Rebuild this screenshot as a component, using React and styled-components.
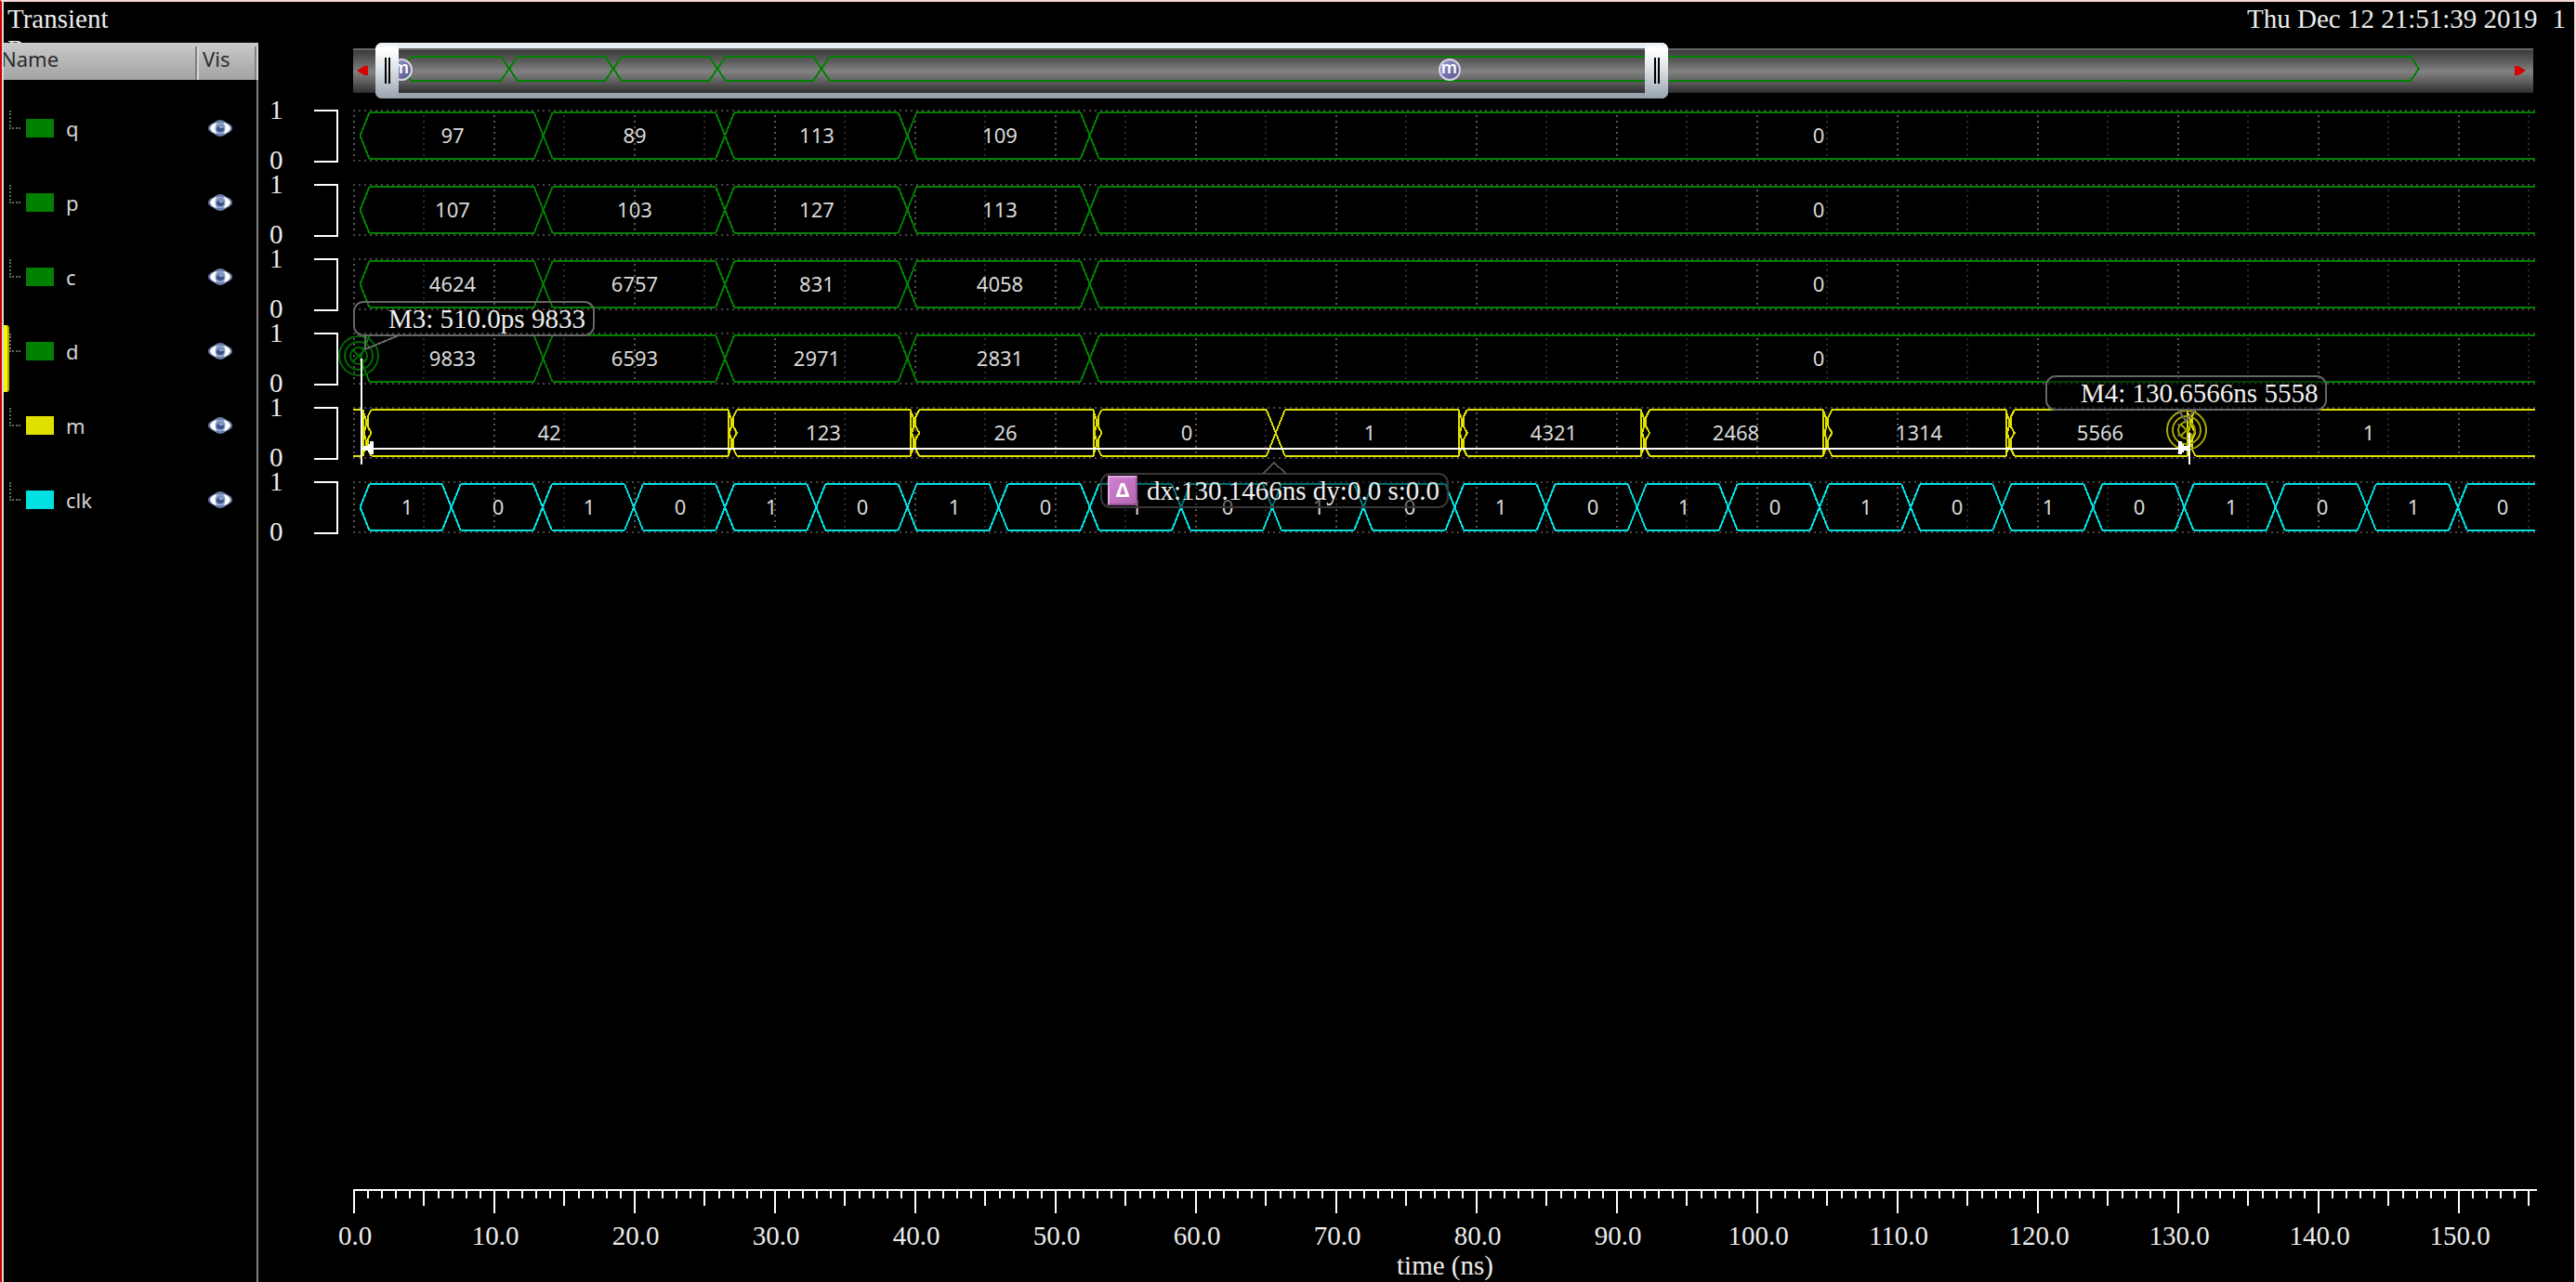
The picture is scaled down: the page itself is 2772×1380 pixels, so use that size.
import React, { useLayoutEffect, useRef, useState } from "react";
import styled, { createGlobalStyle } from "styled-components";

const serif = '"Liberation Serif", "Times New Roman", serif';
const sans = '"Noto Sans", "Open Sans", sans-serif';

const GREEN = "#008000";
const YELLOW = "#e0e000";
const CYAN = "#00e0e0";

/* ---------- data ---------- */

const VIEW_NS = 155.5;
const TAIL_NS = 156.2;
const busTimes = [0.5, 13.55, 26.5, 39.5, 52.5];

const bus = (values) => values.map((value, i) => ({ at: busTimes[i], value }));

const signals = [
  { name: "q", color: GREEN, segments: bus(["97", "89", "113", "109", "0"]) },
  { name: "p", color: GREEN, segments: bus(["107", "103", "127", "113", "0"]) },
  { name: "c", color: GREEN, segments: bus(["4624", "6757", "831", "4058", "0"]) },
  { name: "d", color: GREEN, selected: true, segments: bus(["9833", "6593", "2971", "2831", "0"]) },
  {
    name: "m",
    color: YELLOW,
    segments: [
      { at: 0.9, value: "42", glitch: true },
      { at: 26.95, value: "123", glitch: true },
      { at: 39.95, value: "26", glitch: true },
      { at: 52.95, value: "0", glitch: true },
      { at: 65.75, value: "1" },
      { at: 79, value: "4321", glitch: true },
      { at: 92, value: "2468", glitch: true },
      { at: 105, value: "1314", glitch: true },
      { at: 118, value: "5566", glitch: true },
      { at: 130.9, value: "1", glitch: true },
    ],
  },
  {
    name: "clk",
    color: CYAN,
    segments: Array.from({ length: 24 }, (_, i) => ({
      at: 0.5 + 6.5 * i,
      value: i % 2 ? "0" : "1",
    })),
  },
];

/* ---------- styles ---------- */

const GlobalStyle = createGlobalStyle`
  body { margin: 0; background: #000; }
  * { box-sizing: border-box; }
`;

const Page = styled.div`
  display: flex;
  flex-direction: column;
  min-height: 100vh;
  color: #ececec;
  background: #000;
  font: 29px/33px ${serif};
  border-top: 2px solid #f8d8d8;
  border-right: 2px solid #f8d8d8;
  border-left: 2px solid #d00000;
`;

const Header = styled.header`
  display: flex;
  justify-content: space-between;
  height: 44px;
  padding: 2px 9px 0 4px;
  overflow: hidden;
  border-left: 2px solid #d8d8d8;
`;

const Title = styled.h1`
  margin: 0;
  font: inherit;
  white-space: pre-line;
`;

const Stamp = styled.div`
  display: flex;
  gap: 16px;
  white-space: nowrap;
`;

const Body = styled.div`
  display: grid;
  grid-template-columns: 276px 1fr;
  flex: 1;
`;

const Sidebar = styled.aside`
  border-left: 2px solid #d8d8d8;
  background: linear-gradient(#808080, #808080) right / 2px 100% no-repeat;
  overflow: hidden;
  font: 22px/30px ${sans};
`;

const SignalTable = styled.table`
  width: 100%;
  table-layout: fixed;
  border-collapse: collapse;
  color: #d4d4d4;
`;

const HeadCell = styled.th`
  width: ${(p) => p.$width || "auto"};
  height: 40px;
  padding: 0 0 6px ${(p) => (p.$width ? "0" : "4px")};
  text-indent: ${(p) => (p.$width ? "-3px" : "0")};
  font-weight: 400;
  text-align: left;
  color: #2c2c2c;
  background:
    linear-gradient(90deg, #808080 50%, #d6d6d6 50%) right 0 bottom 0 / 4px 36px no-repeat,
    linear-gradient(#cacaca, #a2a2a2);
`;

const HeadGap = styled.tbody`
  td { height: 12px; padding: 0; }
`;

const SignalCell = styled.td`
  position: relative;
  height: 80px;
  padding: 0;
`;

const SignalName = styled.div`
  display: flex;
  align-items: center;
  height: 80px;
  padding-left: 6px;
`;

const Branch = styled.span`
  width: 12px;
  height: 20px;
  margin: 0 6px 18px 0;
  border: dotted #666;
  border-width: 0 0 2px 2px;
`;

const Swatch = styled.span`
  width: 30px;
  height: 20px;
  margin-right: 13px;
  background: ${(p) => p.$color};
`;

const Selection = styled.span`
  position: absolute;
  left: 0;
  top: 12px;
  width: 6px;
  height: 72px;
  border-right: 2px solid #a8a800;
  border-radius: 0 3px 3px 0;
  background: #f4f400;
`;

const EyeButton = styled.button`
  display: block;
  width: 28px;
  height: 20px;
  margin-left: 9px;
  padding: 0;
  border: 0;
  background: none;
  svg { display: block; }
`;

const Main = styled.main`
  display: flex;
  flex-direction: column;
  padding-right: 42px;
  min-width: 0;
`;

const Overview = styled.div`
  position: relative;
  height: 60px;
  margin-left: 102px;
  padding: 6px 2px 6px 0;
`;

const Track = styled.div`
  display: flex;
  justify-content: space-between;
  align-items: center;
  height: 48px;
  padding: 0 8px 2px 4px;
  border-top: 2px solid #666;
  background: linear-gradient(#3c3c3c, #5a5a5a 24%, #828282 50%, #5a5a5a 76%, #2e2e2e);
`;

const ArrowButton = styled.button`
  width: 12px;
  height: 10px;
  padding: 0;
  border: 0;
  background: none;
  svg { display: block; }
`;

const Drawing = styled.svg`
  position: absolute;
  left: 0;
  top: 0;
  width: 100%;
  height: 100%;
  overflow: visible;
  pointer-events: none;
`;

const MarkerBadge = styled.span`
  position: absolute;
  top: 17px;
  width: 24px;
  height: 24px;
  border: 2px solid #d4d4e4;
  border-radius: 50%;
  background: linear-gradient(135deg, #9a9ad0, #55558a);
  color: #fff;
  font: 600 18px/15px ${sans};
  text-align: center;
  text-indent: -1px;
`;

const Range = styled.div`
  position: absolute;
  top: 0;
  display: flex;
  justify-content: space-between;
  height: 60px;
  border: solid;
  border-width: 6px 0;
  border-color: #e6edf3 transparent #98a3ae;
  border-radius: 7px;
`;

const Grip = styled.button`
  display: flex;
  justify-content: center;
  align-items: center;
  gap: 2px;
  width: 25px;
  height: 60px;
  margin: -6px 0;
  padding: 0 0 8px;
  border: 0;
  border-radius: ${(p) => (p.$end ? "0 7px 7px 0" : "7px 0 0 7px")};
  background: linear-gradient(#e8eef4, #fff 12%, #e0e5e9 45%, #98a3ae);
  &::before, &::after {
    content: "";
    width: 2px;
    height: 28px;
    margin-top: 8px;
    background: #000;
  }
`;

const Lanes = styled.div`
  position: relative;
  margin-left: 102px;
`;

const LaneList = styled.div`
  margin-left: -102px;
`;

const Lane = styled.div`
  display: grid;
  grid-template-columns: 60px 26px 16px 1fr;
  height: 80px;
`;

const Levels = styled.div`
  display: flex;
  flex-direction: column;
  justify-content: space-between;
  height: 76px;
  padding: 2px 0 0 12px;
  line-height: 20px;
`;

const Bracket = styled.span`
  height: 57px;
  margin-top: 12px;
  border: solid #fff;
  border-width: 2px 2px 2px 0;
`;

const WaveSvg = styled.svg`
  grid-column: 4;
  display: block;
  width: 100%;
  height: 80px;
  overflow: visible;
  text {
    font: 22px ${sans};
    fill: #dadada;
    text-anchor: middle;
  }
`;

const Callout = styled.div`
  position: absolute;
  display: flex;
  align-items: center;
  gap: 10px;
  height: 38px;
  padding: 0 8px 0 ${(p) => p.$indent}px;
  border: 2px solid ${(p) => p.$line};
  border-radius: 11px;
  background: ${(p) => p.$fill};
  color: #f0f0f0;
  white-space: nowrap;
`;

const DeltaIcon = styled.span`
  width: 32px;
  height: 32px;
  border: 2px solid;
  border-color: #e6a8e4 #9a549a #9a549a #e6a8e4;
  background: linear-gradient(135deg, #d080ce, #b468b4);
  color: #fff;
  font: 700 21px/26px ${sans};
  text-align: center;
`;

const AxisSvg = styled.svg`
  display: block;
  width: 100%;
  height: 100px;
  overflow: visible;
  text {
    font: 29px ${serif};
    fill: #ececec;
    text-anchor: middle;
  }
`;

const Axis = styled.footer`
  margin: auto 0 0 102px;
`;

/* ---------- drawing ---------- */

function useWidth() {
  const ref = useRef(null);
  const [width, setWidth] = useState(1200);
  useLayoutEffect(() => {
    const measure = () => setWidth(ref.current.getBoundingClientRect().width);
    measure();
    const observer = new ResizeObserver(measure);
    observer.observe(ref.current);
    return () => observer.disconnect();
  }, []);
  return [ref, width];
}

const Eye = () => (
  <svg width="28" height="20" viewBox="0 0 28 20" aria-hidden="true">
    <ellipse cx="14" cy="10" rx="13" ry="7" fill="#62779f" />
    <ellipse cx="14" cy="10" rx="9" ry="9" fill="#6a80ae" />
    <ellipse cx="14" cy="10" rx="11" ry="6" fill="#a4b4d6" />
    <path d="M3 10Q5 5 10 4Q7 10 10 16Q5 15 3 10ZM25 10Q23 5 18 4Q21 10 18 16Q23 15 25 10Z" fill="#fff" />
    <ellipse cx="14" cy="10" rx="5" ry="5" fill="#7c90ba" />
    <ellipse cx="14" cy="11" rx="4" ry="3" fill="#3c5488" />
    <path d="M13 8h4v2h-4z" fill="#8fa2cc" />
  </svg>
);

const TOP = 15;
const MID = 40;
const BOT = 65;

function wavePath(segments, x, end) {
  let d = "";
  segments.forEach((s, i) => {
    const a = x(s.at);
    const next = segments[i + 1];
    const startPad = s.glitch ? 6 : 10;
    const b = next ? x(next.at) - (next.glitch ? 3 : 10) : end;
    d += `M${a + startPad} ${TOP}H${b}M${a + startPad} ${BOT}H${b}`;
    if (s.glitch) {
      d += `M${a - 3} ${TOP}V${BOT}`;
      d += `M${a + 6} ${TOP}L${a + 2} ${TOP + 8}V${MID - 7}L${a + 6} ${MID}L${a + 2} ${MID + 7}V${BOT - 8}L${a + 6} ${BOT}`;
      d += `M${a - 3} ${TOP + 2}L${a} ${TOP + 10}V${MID - 7}L${a - 2} ${MID}L${a} ${MID + 7}V${BOT - 10}L${a - 3} ${BOT - 2}`;
    } else if (i === 0) {
      d += `M${a + 10} ${TOP}L${a} ${MID}L${a + 10} ${BOT}`;
    } else {
      d += `M${a - 10} ${TOP}L${a + 10} ${BOT}M${a - 10} ${BOT}L${a + 10} ${TOP}`;
    }
  });
  if (segments[0].glitch) d += `M0 ${TOP}H8M0 ${BOT}H8`;
  return d;
}

function Wave({ signal, width }) {
  const x = (t) => (t * width) / VIEW_NS;
  const grid = Array.from({ length: 32 }, (_, i) => i * 5);
  return (
    <WaveSvg shapeRendering="crispEdges">
      <g strokeWidth="2" strokeDasharray="2 4" fill="none">
        <path d={`M0 13H${width}M0 67H${width}`} stroke="#464646" />
        {grid.map((t) => (
          <path key={t} d={`M${Math.round(x(t)) + 1} 18V64`} stroke={t % 10 ? "#2b2b2b" : "#565656"} />
        ))}
      </g>
      <path d={wavePath(signal.segments, x, width)} stroke={signal.color} strokeWidth="2" fill="none" />
      {signal.segments.map((s, i) => {
        const next = signal.segments[i + 1];
        const mid = (x(s.at) + x(next ? next.at : TAIL_NS)) / 2;
        return (
          <text key={i} x={Math.round(mid) + 1} y="48">{s.value}</text>
        );
      })}
    </WaveSvg>
  );
}

const Target = ({ cx, cy, color }) => (
  <g fill="none" stroke={color} strokeWidth="2">
    <circle cx={cx} cy={cy} r="21" />
    <circle cx={cx} cy={cy} r="15" />
    <circle cx={cx} cy={cy} r="9" />
    <path d={`M${cx - 6} ${cy - 6}l12 12m0 -12l-12 12`} />
  </g>
);

function Annotations({ width }) {
  const x = (t) => Math.round(1 + (t * width) / VIEW_NS);
  const a = x(0.51);
  const b = x(130.8);
  const mid = Math.round((a + b) / 2);
  return (
    <>
      <Drawing>
        <Target cx={a - 3} cy={277} color="#006a00" />
        <Target cx={b - 3} cy={357} color="#a8a800" />
      </Drawing>
      <Callout $line="#666" $fill="transparent" $indent={36} style={{ left: a - 9, top: 218 }}>
        M3: 510.0ps 9833
      </Callout>
      <Callout $line="#666" $fill="rgba(0,0,0,.5)" $indent={36} style={{ left: b - 155, top: 298 }}>
        M4: 130.6566ns 5558
      </Callout>
      <Callout $line="#383838" $fill="rgba(0,0,0,.5)" $indent={6} style={{ left: mid - 189, top: 403 }}>
        <DeltaIcon>Δ</DeltaIcon>
        dx:130.1466ns dy:0.0 s:0.0
      </Callout>
      <Drawing shapeRendering="crispEdges">
        <g fill="none" stroke="#666" strokeWidth="2">
          <path d={`M${a + 4} 255V270L${a + 40} 255`} />
          <path d={`M${b - 12} 335L${b - 4} 347L${b + 6} 335`} />
          <path d={`M${mid - 14} 404L${mid - 2} 392L${mid + 11} 404`} stroke="#4a4a4a" />
        </g>
        <g stroke="#fff" strokeWidth="2" fill="#fff">
          <path d={`M${a} 280V394M${b} 360V394M${a} 377H${b}`} />
          <path d={`M${a + 2} 374l5 0v-2h2v-3h4v14h-4v-2h-2v-2h-5z`} stroke="none" />
          <path d={`M${b - 1} 374l-5 0v-2h-2v-3h-4v14h4v-2h2v-2h5z`} stroke="none" />
        </g>
      </Drawing>
    </>
  );
}

function OverviewBar({ width }) {
  const k = width / 2348;
  const x = (t) => Math.round((50.7 + t * 8.64) * k);
  const start = x(0.5);
  const end = x(251.4);
  const crossings = busTimes.slice(1).map(x);
  let d = "";
  let from = start + 7;
  crossings.forEach((c) => {
    d += `M${from} 15H${c - 9}L${c + 9} 41M${from} 41H${c - 9}L${c + 9} 15`;
    from = c + 9;
  });
  d += `M${from} 15H${end - 9}L${end} 28L${end - 9} 41H${from}`;
  d += `M${start + 7} 15L${start} 28L${start + 7} 41`;
  return (
    <Overview>
      <Track>
        <ArrowButton aria-label="Scroll left">
          <svg width="12" height="10"><path d="M0 5L8 0H12V10H8Z" fill="#d80000" /></svg>
        </ArrowButton>
        <ArrowButton aria-label="Scroll right">
          <svg width="12" height="10"><path d="M12 5L4 0H0V10H4Z" fill="#d80000" /></svg>
        </ArrowButton>
      </Track>
      <Drawing shapeRendering="crispEdges">
        <path d={d} fill="none" stroke={GREEN} strokeWidth="2" />
      </Drawing>
      <MarkerBadge style={{ left: x(0.51) - 15 }}>m</MarkerBadge>
      <MarkerBadge style={{ left: x(130.6566) - 12 }}>m</MarkerBadge>
      <Range style={{ left: x(0) - 27, width: x(VIEW_NS) - x(0) + 48 }}>
        <Grip aria-label="Range start" />
        <Grip $end aria-label="Range end" />
      </Range>
    </Overview>
  );
}

function TimeAxis({ width }) {
  const x = (t) => Math.round(1 + (t * width) / VIEW_NS);
  const ticks = Array.from({ length: 156 }, (_, t) => t);
  const d = ticks.map((t) => `M${x(t)} 0V${t % 10 === 0 ? 26 : t % 5 === 0 ? 18 : 10}`).join("");
  return (
    <Axis>
      <AxisSvg shapeRendering="crispEdges">
        <path d={`M0 1H${width + 2}${d}`} stroke="#fff" strokeWidth="2" />
        {ticks.filter((t) => t % 10 === 0).map((t) => (
          <text key={t} x={x(t) + 1} y="60">{t.toFixed(1)}</text>
        ))}
        <text x={Math.round(width / 2) + 1} y="92">time (ns)</text>
      </AxisSvg>
    </Axis>
  );
}

export default function App() {
  const [ref, width] = useWidth();
  return (
    <Page>
      <GlobalStyle />
      <Header>
        <Title>{"Transient\nResponse"}</Title>
        <Stamp>
          <time>Thu Dec 12 21:51:39 2019</time>
          <span>1</span>
        </Stamp>
      </Header>
      <Body>
        <Sidebar>
          <SignalTable>
            <thead>
              <tr>
                <HeadCell $width="210px">Name</HeadCell>
                <HeadCell>Vis</HeadCell>
              </tr>
            </thead>
            <HeadGap><tr><td colSpan={2} /></tr></HeadGap>
            <tbody>
              {signals.map((s) => (
                <tr key={s.name}>
                  <SignalCell>
                    {s.selected && <Selection />}
                    <SignalName>
                      <Branch />
                      <Swatch $color={s.color} />
                      {s.name}
                    </SignalName>
                  </SignalCell>
                  <SignalCell>
                    <EyeButton aria-label={`Toggle ${s.name}`}><Eye /></EyeButton>
                  </SignalCell>
                </tr>
              ))}
            </tbody>
          </SignalTable>
        </Sidebar>
        <Main>
          <OverviewBar width={width} />
          <Lanes ref={ref}>
            <LaneList>
              {signals.map((s) => (
                <Lane key={s.name}>
                  <Levels><span>1</span><span>0</span></Levels>
                  <Bracket />
                  <Wave signal={s} width={width} />
                </Lane>
              ))}
            </LaneList>
            <Annotations width={width} />
          </Lanes>
          <TimeAxis width={width} />
        </Main>
      </Body>
    </Page>
  );
}
